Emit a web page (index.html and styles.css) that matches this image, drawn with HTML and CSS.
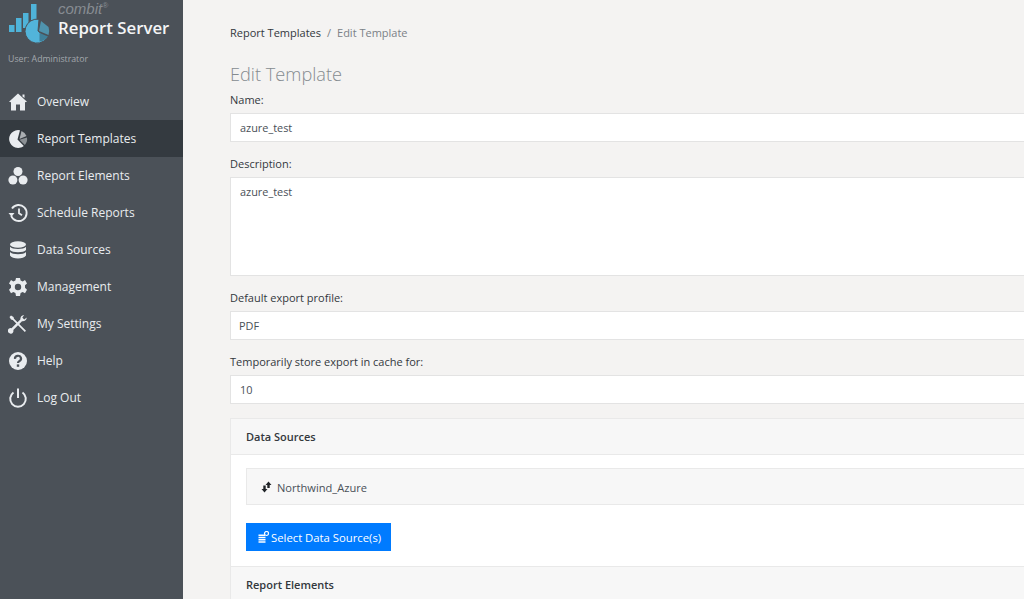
FILE: index.html
```html
<!DOCTYPE html>
<html lang="en">
  <head>
    <meta charset="UTF-8" />
    <title>Edit Template</title>
    <link rel="stylesheet" href="styles.css">
  </head>
  <body>
    <aside class="sidebar">
      <div class="brand">
        <svg class="brand-logo" width="52" height="44" viewBox="0 0 52 44">
          <rect x="9" y="25" width="5.500" height="7" fill="#4fb3d9" />
          <rect x="16" y="18" width="5.500" height="14" fill="#4fb3d9" />
          <rect x="23" y="13" width="5.500" height="15" fill="#4fb3d9" />
          <rect x="31" y="4" width="5.500" height="16" fill="#4fb3d9" />
          <path d="M39 19.300 L38 31 L46.500 38.500 A12 12 0 1 1 39 19.300 Z" fill="#52b4da" stroke="#4b5158" stroke-width="1" />
          <path d="M41 21 L48.500 27 A12 12 0 0 1 48.500 35 L39 31 Z" fill="#4f93ad" />
          <path d="M39.500 33 L48 36.500 A12 12 0 0 1 39.500 41.500 Z" fill="#3f7f99" />
        </svg>
        <div class="brand-text">
          <div class="brand-small">combit<sup>®</sup></div>
          <div class="brand-name">Report Server</div>
        </div>
      </div>
      <div class="user">User: Administrator</div>
      <nav class="nav">
        <a class="nav-item">
          <svg class="nav-icon" viewBox="0 0 20 20"><path d="M10 1.500 L19 9.800 L17 10.300 L17 18.500 L12 18.500 L12 12.500 L8 12.500 L8 18.500 L3 18.500 L3 10.300 L1 9.800 Z M14.500 2.500 L16.500 2.500 L16.500 6 L14.500 4.500 Z" /></svg>
          Overview
        </a>
        <a class="nav-item active">
          <svg class="nav-icon" viewBox="0 0 20 20"><path d="M12 1.200 A9 9 0 1 0 15.800 17 L9.500 10.500 Z" /><path d="M13.500 2 A9 9 0 0 1 18.500 7 L11.500 10 Z" fill="#a9adb1" /><path d="M19 8.500 A9 9 0 0 1 16.800 16 L11.500 10.800 Z" fill="#8b9094" /></svg>
          Report Templates
        </a>
        <a class="nav-item">
          <svg class="nav-icon" viewBox="0 0 20 20"><circle cx="10" cy="5.500" r="4.500" /><circle cx="4.900" cy="14" r="4.500" /><circle cx="15.100" cy="14" r="4.500" /></svg>
          Report Elements
        </a>
        <a class="nav-item">
          <svg class="nav-icon" viewBox="0 0 20 20"><path d="M4 5.500 A8 8 0 1 1 3.200 13" fill="none" stroke="#e9ecef" stroke-width="1.900" /><path d="M0.500 10 L6.500 10 L3.500 13.800 Z" /><path d="M11 5.500 L11 10.300 L14 12.300" fill="none" stroke="#e9ecef" stroke-width="1.800" /></svg>
          Schedule Reports
        </a>
        <a class="nav-item">
          <svg class="nav-icon" viewBox="0 0 20 20"><ellipse cx="10" cy="4.500" rx="8" ry="3.300" /><path d="M2 6.800 C4 9.800 16 9.800 18 6.800 L18 10 C16 13 4 13 2 10 Z" /><path d="M2 12 C4 15 16 15 18 12 L18 15.500 C16 19.500 4 19.500 2 15.500 Z" /></svg>
          Data Sources
        </a>
        <a class="nav-item">
          <svg class="nav-icon" viewBox="0 0 20 20"><path fill-rule="evenodd" d="M8 1 L12 1 L12.600 3.600 L14.700 4.500 L17 3.100 L19 6.500 L17 8.300 L17 10.700 L19 12.800 L17 16.300 L14.700 15 L12.600 16.100 L12 19 L8 19 L7.400 16.100 L5.300 15 L3 16.300 L1 12.800 L3 10.700 L3 8.300 L1 6.500 L3 3.100 L5.300 4.500 L7.400 3.600 Z M10 6.800 A3.200 3.200 0 1 0 10 13.200 A3.200 3.200 0 1 0 10 6.800 Z" /></svg>
          Management
        </a>
        <a class="nav-item">
          <svg class="nav-icon" viewBox="0 0 20 20"><path d="M1.500 3 L3 1.500 L5.500 3 L6 4.800 L18 16.800 L16.800 18 L4.800 6 L3 5.500 Z" /><path d="M18.800 3.500 A4.500 4.500 0 0 1 14 7.300 L5.300 16 A2.800 2.800 0 1 1 3.500 14.200 L12.300 5.500 A4.500 4.500 0 0 1 16.200 1 L14.300 3.500 L16.200 5.600 Z" /></svg>
          My Settings
        </a>
        <a class="nav-item">
          <svg class="nav-icon" viewBox="0 0 20 20"><circle cx="10" cy="10" r="9" /><path d="M7 7.800 A3 2.800 0 1 1 11.500 10 C10.500 10.700 10 11 10 12" fill="none" stroke="#4b5158" stroke-width="2.200" /><rect x="8.800" y="13.400" width="2.400" height="2.400" fill="#4b5158" /></svg>
          Help
        </a>
        <a class="nav-item">
          <svg class="nav-icon" viewBox="0 0 20 20"><path d="M5.500 4.500 A7.800 7.800 0 1 0 14.500 4.500" fill="none" stroke="#e9ecef" stroke-width="2" /><rect x="9" y="0.500" width="2" height="9.500" /></svg>
          Log Out
        </a>
      </nav>
    </aside>

    <main class="main">
      <div class="breadcrumb">
        <span>Report Templates</span>
        <span class="crumb-sep">/</span>
        <span class="crumb-current">Edit Template</span>
      </div>
      <h1 class="title">Edit Template</h1>

      <label class="label label-first">Name:</label>
      <div class="field">azure_test</div>

      <label class="label">Description:</label>
      <div class="field field-area">azure_test</div>

      <label class="label">Default export profile:</label>
      <div class="field field-select">PDF</div>

      <label class="label">Temporarily store export in cache for:</label>
      <div class="field">10</div>

      <section class="card">
        <div class="card-header">Data Sources</div>
        <div class="card-body">
          <div class="list-item">
            <svg class="list-icon" width="11" height="12" viewBox="0 0 11 12"><path d="M7.500 0.500 L10.500 4 L8.700 4 L8.700 7 L6.300 7 L6.300 4 L4.500 4 Z" /><path d="M3.500 11.500 L0.500 8 L2.300 8 L2.300 4.500 L4.700 4.500 L4.700 8 L6.500 8 Z" /></svg>
            Northwind_Azure
          </div>
          <button class="button">
            <svg class="button-icon" width="11" height="12" viewBox="0 0 11 12"><path d="M0.500 3.500 H7 V5 H0.500 Z M0.500 5.800 H7.500 V7.300 H0.500 Z M0.500 8.100 H7.500 V9.600 H0.500 Z M0.500 10.300 H7.500 V11.800 H0.500 Z" /><circle cx="8.500" cy="2.500" r="2" fill="none" stroke="#fff" stroke-width="1.200" /></svg>
            Select Data Source(s)
          </button>
        </div>
        <div class="card-header card-header-next">Report Elements</div>
      </section>
    </main>
  </body>
</html>
```

FILE: styles.css
```css
* {
  margin: 0;
  padding: 0;
  box-sizing: border-box;
}

html, body {
  height: 100%;
  overflow: hidden;
}

body {
  display: flex;
  background: #f4f3f2;
  color: #33383d;
  font-family: "Open Sans", sans-serif;
  font-size: 11px;
}

.sidebar {
  width: 183px;
  flex-shrink: 0;
  background: #4b5158;
  color: #e9ecef;
}

.brand {
  display: flex;
  height: 44px;
}

.brand-text {
  margin-left: 6px;
}

.brand-small {
  height: 17px;
  font-family: "Liberation Sans", sans-serif;
  font-size: 15px;
  font-style: italic;
  line-height: 17px;
  color: #878c92;
}

.brand-small sup {
  font-size: 8px;
  line-height: 0;
}

.brand-name {
  font-size: 16.800px;
  font-weight: 600;
  line-height: 22px;
  color: #f4f5f6;
}

.user {
  padding: 8px 8px 0;
  font-size: 8.750px;
  line-height: 14px;
  color: #a3a8ad;
}

.nav {
  margin-top: 17px;
}

.nav-item {
  display: flex;
  align-items: center;
  height: 37px;
  padding-left: 8px;
  font-size: 12px;
}

.nav-item.active {
  background: #343a40;
}

.nav-icon {
  width: 20px;
  height: 20px;
  margin-right: 9px;
  fill: #e9ecef;
}

.main {
  width: 900px;
  flex-shrink: 0;
  padding: 25px 0 0 47px;
}

.breadcrumb {
  display: flex;
  gap: 6px;
  line-height: 16px;
}

.crumb-sep,
.crumb-current {
  color: #7b8187;
}

.title {
  margin-top: 20px;
  font-size: 18.200px;
  font-weight: 300;
  line-height: 26px;
  color: #858b90;
}

.label {
  display: block;
  margin-top: 13px;
  margin-bottom: 5px;
  line-height: 17px;
}

.label-first {
  margin-top: 4px;
}

.field {
  height: 29px;
  padding: 0 9px;
  background: #fff;
  border: 1px solid #e3e3e3;
  font-size: 10.900px;
  line-height: 27px;
  color: #495057;
}

.field-area {
  height: 99px;
}

.field-select {
  padding-left: 8px;
}

.card {
  margin-top: 14px;
  background: #fff;
  border: 1px solid #e9e9e9;
}

.card-header {
  height: 36px;
  padding-left: 15px;
  background: #f7f7f7;
  border-bottom: 1px solid #e9e9e9;
  font-weight: 600;
  line-height: 36px;
}

.card-header-next {
  border-top: 1px solid #e9e9e9;
  border-bottom: 0;
}

.card-body {
  padding: 13px 15px 15px;
}

.list-item {
  display: flex;
  align-items: center;
  gap: 5px;
  height: 37px;
  padding: 1px 0 0 14px;
  background: #f7f7f7;
  border: 1px solid #e9e9e9;
  font-size: 11.100px;
  color: #495057;
}

.list-icon {
  fill: #212529;
}

.button {
  display: flex;
  align-items: center;
  gap: 2px;
  width: 145px;
  height: 28px;
  margin-top: 18px;
  padding-left: 12px;
  background: #007bff;
  border: 0;
  color: #fff;
  font-family: "Open Sans", sans-serif;
  font-size: 11.300px;
}

.button-icon {
  fill: #fff;
}
```
